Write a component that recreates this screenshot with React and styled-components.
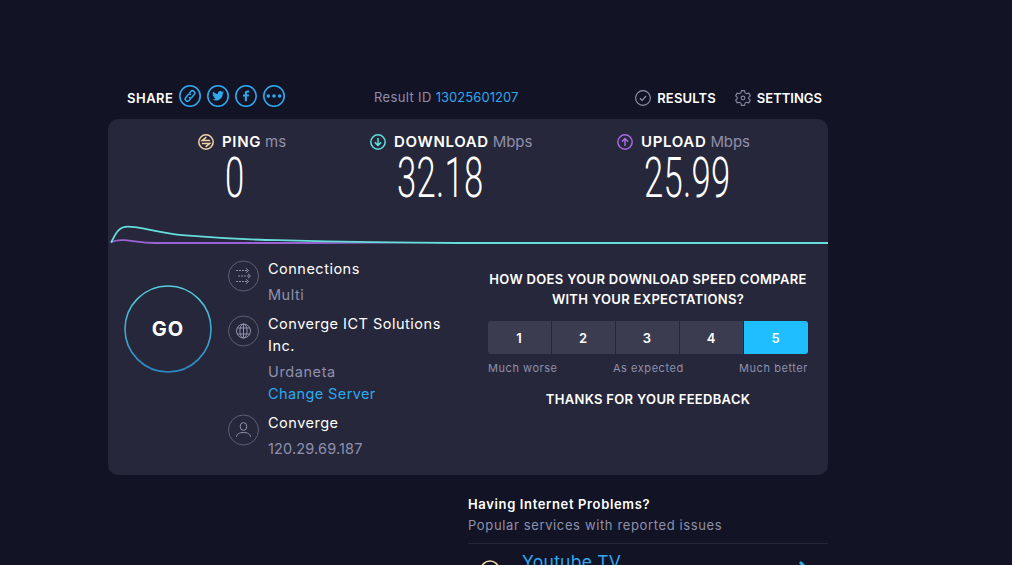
import React, { useState } from "react";
import styled, { createGlobalStyle } from "styled-components";

const GlobalStyle = createGlobalStyle`
  * {
    box-sizing: border-box;
  }
  body {
    margin: 0;
    background: #121324;
    color: #fff;
    font-family: Inter, "Open Sans", sans-serif;
    overflow: hidden;
  }
  svg {
    display: block;
    flex: none;
  }
`;

const Page = styled.div`
  height: 565px;
  padding: 82px 0 0 108px;
  overflow: hidden;
`;

const Container = styled.main`
  width: 720px;
`;

const Header = styled.header`
  display: grid;
  grid-template-columns: 247px 1fr auto;
  align-items: center;
  height: 37px;
  padding: 0 6px 6px 19px;
  font-size: 13px;
  line-height: 20px;
`;

const Share = styled.div`
  display: flex;
  align-items: center;
  gap: 6px;
  padding-bottom: 3px;
`;

const ShareLabel = styled.span`
  width: 46px;
  padding-top: 3px;
  font-weight: 600;
  letter-spacing: 0.5px;
  white-space: nowrap;
`;

const ResultId = styled.div`
  color: #8f90ac;
  letter-spacing: 0.36px;
  margin-top: -1px;
`;

const ResultLink = styled.a`
  color: #2fa8ee;
  letter-spacing: 0.05px;
`;

const Nav = styled.nav`
  display: flex;
  gap: 19px;
`;

const NavItem = styled.a`
  display: flex;
  align-items: center;
  gap: 6px;
  font-weight: 600;
  letter-spacing: ${(p) => p.$spacing}px;
`;

const Panel = styled.section`
  height: 356px;
  border-radius: 10px;
  background: #26273a;
`;

const Metrics = styled.div`
  display: grid;
  grid-template-columns: 172px 247px auto;
  height: 104px;
  padding: 13px 0 0 90px;
`;

const MetricTitle = styled.div`
  display: flex;
  align-items: center;
  height: 20px;
  font-size: 15px;
  line-height: 18px;
`;

const MetricName = styled.span`
  margin: -1px 0 0 8px;
  font-weight: 600;
  letter-spacing: 0.66px;
`;

const MetricUnit = styled.span`
  margin: -1px 0 0 4px;
  color: #8f90ac;
  letter-spacing: -0.1px;
`;

const MetricValue = styled.div`
  height: 50px;
  margin: 1px 0 0 27px;
  font-family: Roboto, sans-serif;
  font-size: 55px;
  font-weight: 300;
  line-height: 50px;
  letter-spacing: 0.4px;
  transform: scaleX(0.63);
  transform-origin: left;
  white-space: nowrap;
`;

const Body = styled.div`
  display: grid;
  grid-template-columns: 104px 260px 320px;
  padding: 11px 0 0 16px;
`;

const GoButton = styled.button`
  display: grid;
  place-items: center;
  width: 88px;
  height: 88px;
  margin-top: 27px;
  padding: 0;
  border: 0;
  background: none;
  color: #fff;
  font-family: inherit;
  font-size: 20px;
  font-weight: 700;
  letter-spacing: 1px;

  > * {
    grid-area: 1 / 1;
  }
`;

const Details = styled.div`
  display: flex;
  flex-direction: column;
  gap: 7px;
`;

const Detail = styled.div`
  display: flex;
  gap: 9px;

  > svg {
    margin-top: 2px;
  }
`;

const DetailLine = styled.div`
  width: 185px;
  margin-top: ${(p) => p.$top || 0}px;
  color: ${(p) => p.$color || "#8f90ac"};
  font-size: 14.5px;
  line-height: 22px;
  letter-spacing: ${(p) => p.$spacing || 0.5}px;
`;

const Survey = styled.div`
  padding-top: 11px;
  text-align: center;
`;

const SurveyTitle = styled.h3`
  margin: 0;
  font-size: 13px;
  font-weight: 600;
  line-height: 20px;
  letter-spacing: 0.32px;
  white-space: nowrap;
`;

const Scale = styled.div`
  display: grid;
  grid-template-columns: repeat(4, 63px) 64px;
  gap: 1px;
  margin-top: 12px;
  border-radius: 3px;
  overflow: hidden;
`;

const ScaleButton = styled.button`
  height: 33px;
  padding: 0 1px 0 0;
  border: 0;
  background: ${(p) => (p.$active ? "#1ebeff" : "#3b3c50")};
  color: #fff;
  font-family: inherit;
  font-size: 13px;
  font-weight: 600;
`;

const ScaleLabels = styled.div`
  display: flex;
  justify-content: space-between;
  margin: 6px 0 13px;
  color: #8f90ac;
  font-size: 11px;
  line-height: 16px;
  letter-spacing: 0.55px;
`;

const Problems = styled.section`
  padding: 19px 0 0 360px;
`;

const ProblemsTitle = styled.h4`
  margin: 0;
  font-size: 13px;
  font-weight: 600;
  line-height: 20px;
  letter-spacing: 0.64px;
`;

const ProblemsText = styled.p`
  margin: 0;
  padding: 1px 0 8px;
  border-bottom: 1px solid #26273a;
  color: #8f90ac;
  font-size: 13px;
  line-height: 20px;
  letter-spacing: 0.63px;
`;

const Service = styled.a`
  display: flex;
  align-items: flex-start;
  height: 40px;
  padding: 8px 18px 0 12px;
  color: #2fa8ee;
  font-size: 17.5px;
  line-height: 20px;
  letter-spacing: 0.25px;

  > svg {
    margin-top: 8px;
  }
`;

const ServiceName = styled.span`
  flex: 1;
  margin-left: 22px;
`;

const ShareIcon = ({ children }) => (
  <svg width="22" height="22" viewBox="0 0 22 22" fill="none" stroke="#2fa8ee">
    <circle cx="11" cy="11" r="10.2" strokeWidth="1.6" />
    {children}
  </svg>
);

const DetailIcon = ({ children }) => (
  <svg width="31" height="32" viewBox="0 0 31 32" fill="none" stroke="#8f90ac">
    <circle cx="15.5" cy="16" r="15" stroke="#5e5f76" />
    {children}
  </svg>
);

const MetricIcon = ({ color, d }) => (
  <svg width="16" height="16" viewBox="0 0 16 16" fill="none" stroke={color} strokeWidth="1.5">
    <circle cx="8" cy="8" r="7.2" />
    <path d={d} />
  </svg>
);

const metrics = [
  {
    name: "PING",
    unit: "ms",
    value: "0",
    color: "#f5d3a6",
    d: "M12.2 6.6H4.2L8.4 3.2M3.8 9.4h8L7.6 12.8",
  },
  {
    name: "DOWNLOAD",
    unit: "Mbps",
    value: "32.18",
    color: "#5fe0dc",
    d: "M8 4v7.4M4.9 8.4L8 11.5l3.1-3.1",
  },
  {
    name: "UPLOAD",
    unit: "Mbps",
    value: "25.99",
    color: "#a76ae0",
    d: "M8 12V4.6M4.9 7.6L8 4.5l3.1 3.1",
  },
];

const SpeedChart = () => (
  <svg width="720" height="24" viewBox="0 0 720 24" fill="none" strokeWidth="1.8">
    <defs>
      <linearGradient id="upload" gradientUnits="userSpaceOnUse" x1="0" y1="0" x2="330" y2="0">
        <stop offset="0.6" stopColor="#9b62d6" />
        <stop offset="1" stopColor="#9b62d6" stopOpacity="0" />
      </linearGradient>
    </defs>
    <path d="M3 19.5C7 17 11 16.8 17 17.2C27 18 33 20 47 20H330" stroke="url(#upload)" />
    <path
      d="M3 19.5C7 13 9 3.6 20 3.6C33 3.6 48 9.5 74 12.2C105 14.8 135 16.4 170 17.2C215 18.4 270 19.8 350 20H720"
      stroke="#66dfdc"
    />
  </svg>
);

function App() {
  const [rating, setRating] = useState(5);

  return (
    <>
      <GlobalStyle />
      <Page>
        <Container>
          <Header>
            <Share>
              <ShareLabel>SHARE</ShareLabel>
              <ShareIcon>
                <g transform="rotate(-50 11 11)" strokeWidth="1.5">
                  <path d="M9.4 13.3H7.2a2.3 2.3 0 0 1 0-4.6h3.2a2.3 2.3 0 0 1 2.3 2.3" />
                  <path d="M12.6 8.7h2.2a2.3 2.3 0 0 1 0 4.6h-3.2a2.3 2.3 0 0 1-2.3-2.3" />
                </g>
              </ShareIcon>
              <ShareIcon>
                <path
                  transform="translate(5.2 4.9) scale(0.49)"
                  fill="#2fa8ee"
                  stroke="none"
                  d="M23.95 4.57a10 10 0 0 1-2.82.77 4.96 4.96 0 0 0 2.16-2.72c-.95.55-2 .95-3.13 1.18a4.92 4.92 0 0 0-8.38 4.48C7.69 8.1 4.07 6.13 1.64 3.16a4.92 4.92 0 0 0 1.52 6.57 4.9 4.9 0 0 1-2.23-.61v.06c0 2.38 1.7 4.37 3.95 4.82a5 5 0 0 1-2.21.09 4.94 4.94 0 0 0 4.6 3.42A9.87 9.87 0 0 1 0 19.54a13.99 13.99 0 0 0 7.55 2.21c9.05 0 14-7.5 14-13.98 0-.21 0-.42-.02-.63a9.94 9.94 0 0 0 2.42-2.57z"
                />
              </ShareIcon>
              <ShareIcon>
                <path
                  fill="#2fa8ee"
                  stroke="none"
                  d="M9.8 16.3v-4.7H8V9.6h1.8V8.2c0-1.8 1-2.7 2.7-2.7H14v1.9h-1c-.8 0-1.1.4-1.1 1v1.2H14l-.3 2h-1.8v4.7z"
                />
              </ShareIcon>
              <ShareIcon>
                <g fill="#2fa8ee" stroke="none">
                  <circle cx="5.3" cy="11" r="1.8" />
                  <circle cx="11" cy="11" r="1.8" />
                  <circle cx="16.7" cy="11" r="1.8" />
                </g>
              </ShareIcon>
            </Share>
            <ResultId>
              Result ID <ResultLink>13025601207</ResultLink>
            </ResultId>
            <Nav>
              <NavItem $spacing={0.15}>
                <svg width="16" height="16" viewBox="0 0 16 16" fill="none" stroke="#9495ae">
                  <circle cx="8" cy="8" r="7.4" strokeWidth="1.1" />
                  <path d="M4.9 8.2l2.2 2.1 4-4.3" strokeWidth="1.2" />
                </svg>
                RESULTS
              </NavItem>
              <NavItem $spacing={0}>
                <svg width="16" height="16" viewBox="0 0 24 24" fill="none" stroke="#85869f" strokeWidth="1.7">
                  <path
                    d="M9.6 1h4.8l.7 3.3 2.4 1.4 3.2-1L23 8.8 20.6 11v2l2.4 2.2-2.3 4.1-3.2-1-2.4 1.4-.7 3.3H9.6l-.7-3.3-2.4-1.4-3.2 1L1 15.2 3.4 13v-2L1 8.8l2.3-4.1 3.2 1 2.4-1.4z"
                    strokeLinejoin="round"
                  />
                  <circle cx="12" cy="12" r="2.8" />
                </svg>
                SETTINGS
              </NavItem>
            </Nav>
          </Header>

          <Panel>
            <Metrics>
              {metrics.map((m) => (
                <div key={m.name}>
                  <MetricTitle>
                    <MetricIcon color={m.color} d={m.d} />
                    <MetricName>{m.name}</MetricName>
                    <MetricUnit>{m.unit}</MetricUnit>
                  </MetricTitle>
                  <MetricValue>{m.value}</MetricValue>
                </div>
              ))}
            </Metrics>
            <SpeedChart />
            <Body>
              <GoButton>
                <svg width="88" height="88" viewBox="0 0 88 88" fill="none">
                  <defs>
                    <linearGradient id="ring" x1="0" y1="0" x2="0" y2="1">
                      <stop offset="0" stopColor="#55cddb" />
                      <stop offset="1" stopColor="#2d86c4" />
                    </linearGradient>
                  </defs>
                  <circle cx="44" cy="44" r="43" stroke="url(#ring)" strokeWidth="1.6" />
                </svg>
                <span>GO</span>
              </GoButton>

              <Details>
                <Detail>
                  <DetailIcon>
                    <path d="M8 10.5h11M10 16h11M8 21.5h11" strokeDasharray="2 1" />
                    <path d="M18 8.3l2.5 2.2-2.5 2.2M20 13.8l2.5 2.2-2.5 2.2M18 19.3l2.5 2.2-2.5 2.2" />
                  </DetailIcon>
                  <div>
                    <DetailLine $color="#fff">Connections</DetailLine>
                    <DetailLine $top={4}>Multi</DetailLine>
                  </div>
                </Detail>
                <Detail>
                  <DetailIcon>
                    <circle cx="15.5" cy="16" r="7" />
                    <ellipse cx="15.5" cy="16" rx="3.6" ry="7" />
                    <path d="M15.5 9v14M9.3 13h12.4M9.3 19h12.4" />
                  </DetailIcon>
                  <div>
                    <DetailLine $color="#fff">Converge ICT Solutions Inc.</DetailLine>
                    <DetailLine $top={4} $spacing={0.6}>
                      Urdaneta
                    </DetailLine>
                    <DetailLine $color="#2fa8ee" $spacing={0.4}>
                      Change Server
                    </DetailLine>
                  </div>
                </Detail>
                <Detail>
                  <DetailIcon>
                    <ellipse cx="15.5" cy="12.5" rx="3.3" ry="3.9" />
                    <path d="M8.5 22.8c0-2.6 2.8-4.3 7-4.3s7 1.7 7 4.3" />
                  </DetailIcon>
                  <div>
                    <DetailLine $color="#fff">Converge</DetailLine>
                    <DetailLine $top={4} $spacing={0.15}>
                      120.29.69.187
                    </DetailLine>
                  </div>
                </Detail>
              </Details>

              <Survey>
                <SurveyTitle>
                  HOW DOES YOUR DOWNLOAD SPEED COMPARE
                  <br />
                  WITH YOUR EXPECTATIONS?
                </SurveyTitle>
                <Scale>
                  {[1, 2, 3, 4, 5].map((n) => (
                    <ScaleButton key={n} $active={n === rating} onClick={() => setRating(n)}>
                      {n}
                    </ScaleButton>
                  ))}
                </Scale>
                <ScaleLabels>
                  <span>Much worse</span>
                  <span>As expected</span>
                  <span>Much better</span>
                </ScaleLabels>
                <SurveyTitle>THANKS FOR YOUR FEEDBACK</SurveyTitle>
              </Survey>
            </Body>
          </Panel>

          <Problems>
            <ProblemsTitle>Having Internet Problems?</ProblemsTitle>
            <ProblemsText>Popular services with reported issues</ProblemsText>
            <Service>
              <svg width="20" height="20" viewBox="0 0 20 20" fill="none" stroke="#f5d3a6" strokeWidth="1.6">
                <circle cx="10" cy="10" r="9" />
              </svg>
              <ServiceName>Youtube TV</ServiceName>
              <svg width="12" height="18" viewBox="0 0 12 18" fill="none" stroke="#2fa8ee" strokeWidth="3">
                <path d="M2 2l7 7-7 7" />
              </svg>
            </Service>
          </Problems>
        </Container>
      </Page>
    </>
  );
}

export default App;
